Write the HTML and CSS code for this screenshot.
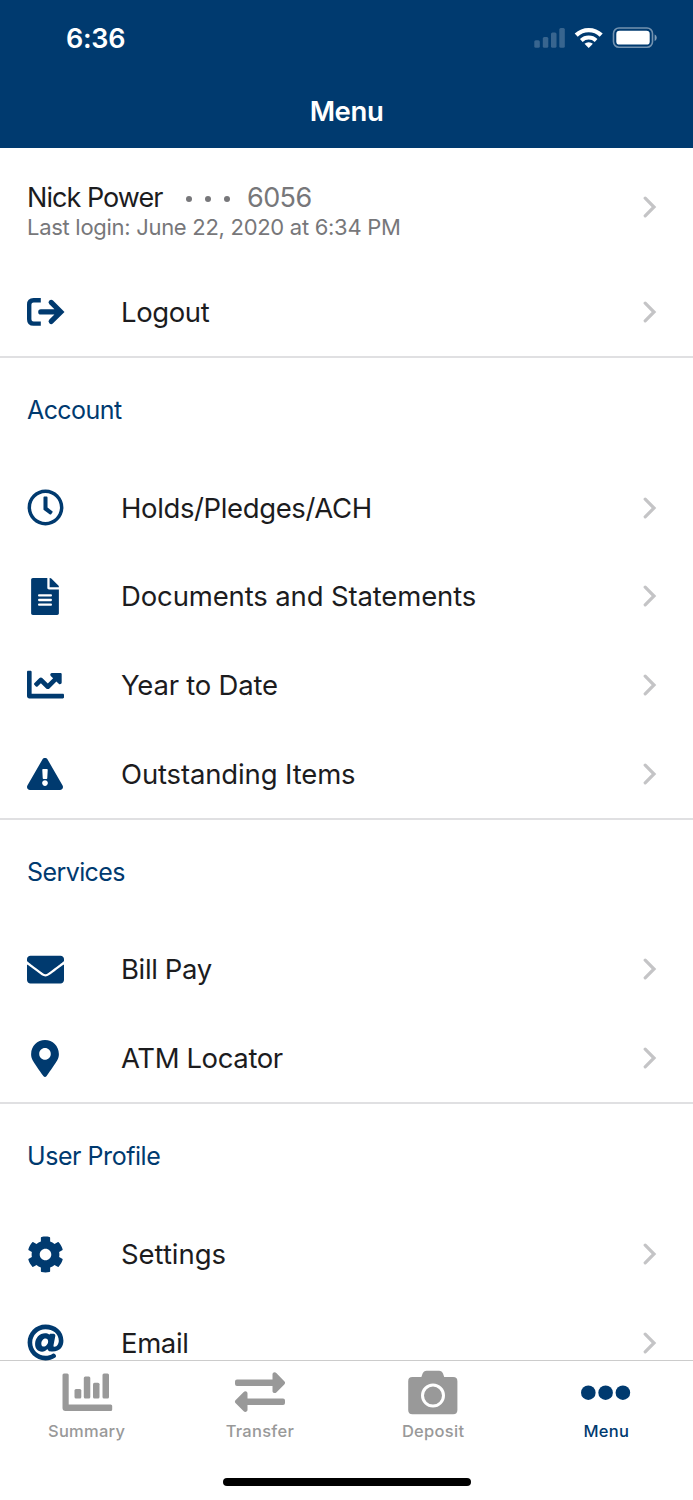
FILE: index.html
```html
<!DOCTYPE html>
<html lang="en">
<head>
<meta charset="utf-8">
<title>Menu</title>
<link rel="stylesheet" href="styles.css">
</head>
<body>
<svg width="0" height="0" class="defs">
  <symbol id="chev" viewBox="0 0 14 22"><path d="M2.2 2.2 11 11 2.2 19.8" fill="none" stroke="#c4c4c6" stroke-width="3.2" stroke-linecap="round" stroke-linejoin="miter"/></symbol>
</svg>
<header class="header">
  <div class="status">
    <span class="time">6:36</span>
    <svg class="status-icons" width="124" height="24" viewBox="0 0 124 24" fill="#fff">
      <g opacity=".22"><rect x="1.3" y="14.3" width="5.5" height="7.5" rx="1.5"/><rect x="9.800" y="11" width="5.500" height="10.800" rx="1.500"/><rect x="18" y="6.500" width="5.500" height="15.300" rx="1.500"/><rect x="26.300" y="2" width="5.500" height="19.800" rx="1.500"/></g>
      <g fill="none" stroke="#fff"><path d="M43.200 9.100a18.200 18.200 0 0 1 25 0" stroke-width="4.400"/><path d="M48.300 14.400a11 11 0 0 1 14.800 0" stroke-width="4"/></g>
      <path d="M51.500 17.800a6.200 6.200 0 0 1 8.400 0L55.700 22z"/>
      <rect x="80.500" y="2" width="39" height="19.200" rx="5.500" fill="none" stroke="#fff" stroke-opacity=".45" stroke-width="1.600"/>
      <rect x="83.300" y="4.800" width="33.400" height="13.800" rx="3.200"/>
      <path d="M121.600 8.400c2.800.8 2.800 5.800 0 6.600z" opacity=".5"/>
    </svg>
  </div>
  <h1 class="title">Menu</h1>
</header>
<main class="content">
  <div class="profile">
    <div>
      <div class="who"><span class="name">Nick Power</span><span class="dots"><i></i><i></i><i></i></span><span class="acct">6056</span></div>
      <div class="last">Last login: June 22, 2020 at 6:34 PM</div>
    </div>
    <svg class="chev"><use href="#chev"/></svg>
  </div>
  <div class="row">
    <span class="ico"><svg width="38" height="28" viewBox="0 0 38 28" fill="none" stroke="currentColor"><path d="M13.800 2.200H6.600Q2.200 2.200 2.200 6.600V21.200Q2.200 25.600 6.600 25.600H13.800" stroke-width="4.400"/><path d="M13.800 13.900H33M24.200 4.400 33.800 13.900 24.200 23.400" stroke-width="5.200" stroke-linecap="round" stroke-linejoin="miter"/></svg></span>
    <span class="label">Logout</span><svg class="chev"><use href="#chev"/></svg>
  </div>
  <section class="section">
    <h2 class="heading">Account</h2>
    <div class="row">
      <span class="ico"><svg width="37" height="37" viewBox="0 0 512 512"><path d="M256 8C119 8 8 119 8 256s111 248 248 248 248-111 248-248S393 8 256 8zm0 448c-110.500 0-200-89.500-200-200S145.500 56 256 56s200 89.500 200 200-89.500 200-200 200zm61.800-104.400l-84.900-61.700c-3.100-2.300-4.900-5.900-4.900-9.700V116c0-6.600 5.400-12 12-12h32c6.600 0 12 5.400 12 12v141.700l66.800 48.600c5.400 3.900 6.500 11.400 2.600 16.800L334.600 349c-3.900 5.300-11.400 6.500-16.800 2.600z"/></svg></span>
      <span class="label">Holds/Pledges/ACH</span><svg class="chev"><use href="#chev"/></svg>
    </div>
    <div class="row">
      <span class="ico narrow"><svg width="28" height="37" viewBox="0 0 384 512"><path d="M224 136V0H24C10.700 0 0 10.700 0 24v464c0 13.300 10.700 24 24 24h336c13.300 0 24-10.700 24-24V160H248c-13.200 0-24-10.800-24-24zm64 236c0 6.600-5.400 12-12 12H108c-6.600 0-12-5.400-12-12v-8c0-6.600 5.400-12 12-12h168c6.600 0 12 5.400 12 12v8zm0-64c0 6.600-5.400 12-12 12H108c-6.600 0-12-5.400-12-12v-8c0-6.600 5.400-12 12-12h168c6.600 0 12 5.400 12 12v8zm0-72v8c0 6.600-5.400 12-12 12H108c-6.600 0-12-5.400-12-12v-8c0-6.600 5.400-12 12-12h168c6.600 0 12 5.400 12 12zm96-114.100v6.100H256V0h6.100c6.400 0 12.500 2.500 17 7l97.900 98c4.500 4.500 7 10.600 7 16.900z"/></svg></span>
      <span class="label docs">Documents and Statements</span><svg class="chev"><use href="#chev"/></svg>
    </div>
    <div class="row">
      <span class="ico"><svg width="37" height="37" viewBox="0 0 512 512"><path d="M496 384H64V80c0-8.840-7.160-16-16-16H16C7.160 64 0 71.160 0 80v336c0 17.670 14.330 32 32 32h464c8.840 0 16-7.160 16-16v-32c0-8.840-7.160-16-16-16zM464 96H345.940c-21.380 0-32.090 25.850-16.970 40.970l32.400 32.400L288 242.750l-73.370-73.370c-12.500-12.500-32.760-12.500-45.250 0l-68.690 68.690c-6.250 6.250-6.250 16.380 0 22.630l22.620 22.620c6.250 6.250 16.380 6.250 22.630 0L192 237.250l73.370 73.370c12.500 12.500 32.760 12.500 45.250 0l96-96 32.400 32.400c15.120 15.120 40.970 4.410 40.970-16.970V112c.010-8.840-7.150-16-15.990-16z"/></svg></span>
      <span class="label year">Year to Date</span><svg class="chev"><use href="#chev"/></svg>
    </div>
    <div class="row">
      <span class="ico"><svg width="36" height="32" viewBox="0 0 576 512"><path d="M569.517 440.013C587.975 472.007 564.806 512 527.940 512H48.054c-36.937 0-59.999-40.055-41.577-71.987L246.423 23.985c18.467-32.009 64.720-31.951 83.154 0l239.940 416.028zM288 354c-25.405 0-46 20.595-46 46s20.595 46 46 46 46-20.595 46-46-20.595-46-46-46zm-43.673-165.346l7.418 136c.347 6.364 5.609 11.346 11.982 11.346h48.546c6.373 0 11.635-4.982 11.982-11.346l7.418-136c.375-6.874-5.098-12.654-11.982-12.654h-63.383c-6.884 0-12.356 5.780-11.981 12.654z"/></svg></span>
      <span class="label docs">Outstanding Items</span><svg class="chev"><use href="#chev"/></svg>
    </div>
  </section>
  <section class="section">
    <h2 class="heading">Services</h2>
    <div class="row">
      <span class="ico"><svg width="37" height="37" viewBox="0 0 512 512"><path d="M502.300 190.800c3.900-3.100 9.700-.2 9.700 4.700V400c0 26.500-21.500 48-48 48H48c-26.500 0-48-21.500-48-48V195.600c0-5 5.700-7.800 9.700-4.700 22.400 17.400 52.100 39.500 154.100 113.600 21.100 15.400 56.700 47.800 92.200 47.600 35.700.3 72-32.800 92.300-47.600 102-74.100 131.600-96.300 154-113.700zM256 320c23.200.4 56.600-29.200 73.400-41.400 132.700-96.300 142.800-104.700 173.400-128.700 5.800-4.500 9.200-11.500 9.200-18.900v-19c0-26.500-21.500-48-48-48H48c-26.500 0-48 21.500-48 48v19c0 7.400 3.400 14.300 9.200 18.900 30.600 23.900 40.700 32.400 173.400 128.700 16.800 12.200 50.200 41.800 73.400 41.400z"/></svg></span>
      <span class="label">Bill Pay</span><svg class="chev"><use href="#chev"/></svg>
    </div>
    <div class="row">
      <span class="ico narrow"><svg width="28" height="37" viewBox="0 0 384 512"><path d="M172.268 501.670C26.970 291.031 0 269.413 0 192 0 85.961 85.961 0 192 0s192 85.961 192 192c0 77.413-26.970 99.031-172.268 309.670-9.535 13.774-29.930 13.773-39.464 0zM192 272c44.183 0 80-35.817 80-80s-35.817-80-80-80-80 35.817-80 80 35.817 80 80 80z"/></svg></span>
      <span class="label">ATM Locator</span><svg class="chev"><use href="#chev"/></svg>
    </div>
  </section>
  <section class="section">
    <h2 class="heading user">User Profile</h2>
    <div class="row">
      <span class="ico"><svg width="37" height="37" viewBox="0 0 512 512"><path d="M487.400 315.700l-42.600-24.600c4.300-23.200 4.300-47 0-70.200l42.600-24.600c4.900-2.800 7.100-8.600 5.500-14-11.100-35.600-30-67.800-54.700-94.600-3.800-4.100-10-5.100-14.800-2.300L380.800 110c-17.900-15.400-38.500-27.300-60.800-35.100V25.800c0-5.600-3.900-10.500-9.400-11.700-36.700-8.200-74.300-7.800-109.200 0-5.500 1.200-9.400 6.100-9.400 11.700V75c-22.200 7.900-42.800 19.800-60.800 35.100L88.700 85.500c-4.900-2.800-11-1.900-14.800 2.300-24.700 26.700-43.600 58.900-54.700 94.600-1.700 5.400.6 11.200 5.500 14L67.300 221c-4.300 23.200-4.300 47 0 70.200l-42.600 24.600c-4.900 2.800-7.100 8.600-5.500 14 11.100 35.600 30 67.800 54.700 94.600 3.800 4.100 10 5.100 14.800 2.300l42.600-24.600c17.900 15.400 38.500 27.300 60.800 35.100v49.200c0 5.600 3.900 10.500 9.400 11.700 36.700 8.200 74.300 7.800 109.200 0 5.500-1.200 9.400-6.100 9.400-11.700v-49.200c22.200-7.900 42.800-19.800 60.800-35.100l42.600 24.600c4.900 2.800 11 1.900 14.800-2.300 24.700-26.700 43.600-58.900 54.700-94.600 1.500-5.500-.7-11.300-5.600-14.100zM256 336c-44.100 0-80-35.900-80-80s35.900-80 80-80 80 35.900 80 80-35.900 80-80 80z"/></svg></span>
      <span class="label settings">Settings</span><svg class="chev"><use href="#chev"/></svg>
    </div>
    <div class="row">
      <span class="ico"><svg width="37" height="37" viewBox="0 0 512 512"><path d="M256 8C118.941 8 8 118.919 8 256c0 137.059 110.919 248 248 248 48.154 0 95.342-14.140 135.408-40.223 12.005-7.815 14.625-24.288 5.552-35.372l-10.177-12.433c-7.671-9.371-21.179-11.667-31.373-5.129C325.920 429.757 291.314 440 256 440c-101.458 0-184-82.542-184-184S154.542 72 256 72c100.139 0 184 57.619 184 160 0 38.786-21.093 79.742-58.170 83.693-17.349-.454-16.910-12.857-13.476-30.024l23.433-121.110C394.653 149.750 383.308 136 368.225 136h-44.981a13.518 13.518 0 0 0-13.432 11.993l-.010.092c-14.697-17.901-40.448-21.775-59.971-21.775-74.580 0-137.831 62.234-137.831 151.460 0 65.303 36.785 105.870 96 105.870 26.984 0 57.369-15.637 74.991-38.333 9.522 34.104 40.613 34.104 70.671 34.104C462.609 379.410 504 307.798 504 232 504 95.653 394.023 8 256 8zm-21.680 304.430c-22.249 0-36.070-15.623-36.070-40.771 0-44.993 30.779-72.729 58.630-72.729 22.292 0 35.601 15.241 35.601 40.770 0 45.061-33.875 72.730-58.161 72.730z"/></svg></span>
      <span class="label">Email</span><svg class="chev"><use href="#chev"/></svg>
    </div>
  </section>
</main>
<nav class="tabs">
  <div class="tab"><svg width="52" height="50" viewBox="0 0 52 50" fill="currentColor"><path d="M3 6.500h3.200q1.500 0 1.500 1.500v29.500h42q1.500 0 1.500 1.500v3.500q0 1.500-1.500 1.500H4.500q-3 0-3-3V8q0-1.500 1.500-1.500z"/><rect x="13.500" y="22" width="6.800" height="9.500" rx="1.500"/><rect x="22.800" y="9.600" width="6.500" height="21.900" rx="1.500"/><rect x="32" y="15.800" width="6.500" height="15.700" rx="1.500"/><rect x="41.500" y="6.500" width="6.500" height="25" rx="1.500"/></svg><span>Summary</span></div>
  <div class="tab"><svg width="52" height="50" viewBox="0 0 52 50" fill="currentColor"><path d="M3 12.600h35.500V7.500c0-2 2.400-2.900 3.800-1.500l8 8.200q1.600 1.600 0 3.200l-8 8c-1.400 1.400-3.800.5-3.800-1.500v-5H3q-2 0-2-2v-2.300q0-2 2-2z"/><path d="M49 31.600H13.500v-5.200c0-2-2.400-2.900-3.800-1.500l-8 8.200q-1.600 1.600 0 3.200l8 8c1.400 1.400 3.800.5 3.800-1.500v-4.900H49q2 0 2-2v-2.300q0-2-2-2z"/></svg><span>Transfer</span></div>
  <div class="tab"><svg width="52" height="50" viewBox="0 0 52 50" fill="currentColor"><path d="M5.400 10h9l1.200-3.400q1-2.900 4-2.900h12.400q3 0 4 2.900l1.200 3.400h9q4.200 0 4.200 4.200v28.800q0 4.200-4.200 4.200H5.400q-4.200 0-4.200-4.200V14.200q0-4.200 4.200-4.200z"/><circle cx="26" cy="28.600" r="10.500" fill="none" stroke="#fff" stroke-width="3"/></svg><span>Deposit</span></div>
  <div class="tab active"><svg width="52" height="50" viewBox="0 0 52 50" fill="currentColor"><circle cx="8.300" cy="25.700" r="7.300"/><circle cx="25.600" cy="25.700" r="7.300"/><circle cx="42.900" cy="25.700" r="7.300"/></svg><span>Menu</span></div>
  <div class="home"></div>
</nav>
</body>
</html>
```
FILE: styles.css
```css
* { box-sizing: border-box; }
body {
  margin: 0; width: 693px; height: 1500px; overflow: hidden;
  display: flex; flex-direction: column;
  background: #fff; color: #1c1c1e;
  font-family: Inter, "Noto Sans", sans-serif;
}
.defs { position: absolute; }
.header { height: 148px; flex: none; background: #003a6f; color: #fff; }
.status { height: 76px; display: flex; align-items: center; justify-content: space-between; padding: 0 36px 0 66px; }
.time { font-size: 27px; font-weight: 600; line-height: 32px; letter-spacing: -.3px; padding-top: 2px; }
.title { margin: 18px 0 0; text-align: center; font-size: 27.500px; line-height: 34px; font-weight: 600; letter-spacing: -.4px; }
.content { flex: 1; min-height: 0; overflow: hidden; margin-bottom: -1px; }
.profile { height: 119.300px; padding: 32px 36px 0 27px; display: flex; justify-content: space-between; }
.profile .chev { margin-top: 16px; }
.who { display: flex; align-items: center; height: 34px; font-size: 27px; }
.name { width: 159px; letter-spacing: -.95px; white-space: nowrap; }
.dots { display: flex; gap: 13px; width: 61px; padding-top: 4px; }
.dots i { width: 6px; height: 6px; border-radius: 50%; background: #77777a; }
.acct { color: #77777a; letter-spacing: -.6px; }
.last { color: #77777a; font-size: 22px; line-height: 26px; letter-spacing: -.29px; white-space: nowrap; }
.chev { width: 14px; height: 22px; flex: none; }
.row { height: 88.700px; display: flex; align-items: center; padding: 0 36px 0 27px; }
.ico { width: 94px; display: flex; color: #003a6f; flex: none; }
.ico svg { fill: currentColor; }
.ico svg[stroke] { fill: none; }
.narrow { padding-left: 4px; }
.label { flex: 1; font-size: 27.500px; line-height: 34px; letter-spacing: -.38px; white-space: nowrap; }
.docs { letter-spacing: -.14px; }
.year { letter-spacing: -.22px; }
.settings { letter-spacing: -.04px; }
.section { border-top: 2px solid #e0e0e2; }
.heading { margin: 0; height: 105.200px; padding: 35px 27px 0; font-size: 25px; line-height: 34px; font-weight: 400; letter-spacing: -.58px; color: #003a6f; }
.user { letter-spacing: -.45px; padding-top: 34.400px; }
.tabs {
  position: relative; height: 140px; flex: none;
  display: grid; grid-template-columns: repeat(4, 1fr); grid-template-rows: 84px 1fr;
  background: #fff; background-clip: padding-box; border-top: 1px solid rgba(0, 0, 0, .2);
}
.tab { display: flex; flex-direction: column; align-items: center; padding-top: 6px; color: #999; font-size: 16.500px; font-weight: 500; line-height: 22px; letter-spacing: .28px; }
.tab svg { display: block; margin: 0 0 2.500px; }
.active { color: #003a6f; }
.home { grid-column: 1 / 5; justify-self: center; width: 248px; height: 8px; border-radius: 4px; background: #000; margin-top: 33px; }
```
